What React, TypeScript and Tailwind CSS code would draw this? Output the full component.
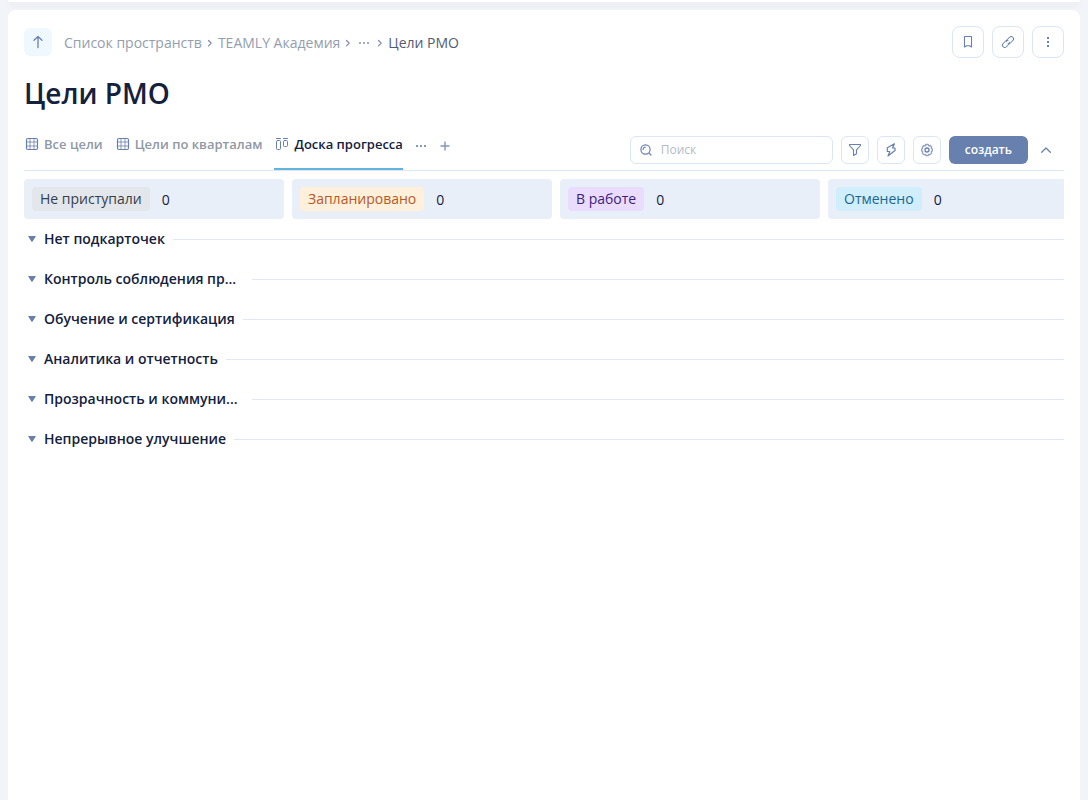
import { useState } from 'react';
import type { ReactNode } from 'react';

const crumbs = ['Список пространств', 'TEAMLY Академия'];

const tabs = [
  { id: 'all', label: 'Все цели', icon: 'table' },
  { id: 'quarters', label: 'Цели по кварталам', icon: 'table' },
  { id: 'board', label: 'Доска прогресса', icon: 'board' },
];

const columns = [
  { title: 'Не приступали', count: 0, badge: 'bg-[#e3e6ea] text-[#32404f]' },
  { title: 'Запланировано', count: 0, badge: 'bg-[#fff0db] text-[#b4592a]' },
  { title: 'В работе', count: 0, badge: 'bg-[#e9dcff] text-[#3f1d78]' },
  { title: 'Отменено', count: 0, badge: 'bg-[#d0eefb] text-[#1c6690]' },
];

const groups = [
  { title: 'Нет подкарточек', width: '' },
  { title: 'Контроль соблюдения пр...', width: 'w-[220px]' },
  { title: 'Обучение и сертификация', width: '' },
  { title: 'Аналитика и отчетность', width: '' },
  { title: 'Прозрачность и коммуни...', width: 'w-[220px]' },
  { title: 'Непрерывное улучшение', width: '' },
];

function Icon({ size = 16, children }: { size?: number; children: ReactNode }) {
  return (
    <svg
      width={size}
      height={size}
      viewBox={`0 0 ${size} ${size}`}
      fill="none"
      stroke="currentColor"
      strokeLinecap="round"
      strokeLinejoin="round"
      className="shrink-0"
      aria-hidden="true"
    >
      {children}
    </svg>
  );
}

function Chevron() {
  return (
    <Icon size={8}>
      <path d="M2.5 1.5 5.2 4.2 2.5 6.9" strokeWidth="1.2" />
    </Icon>
  );
}

function Dots() {
  return (
    <svg width="12" height="4" viewBox="0 0 12 4" fill="currentColor" aria-hidden="true">
      <rect x="1" y="1" width="2" height="2" />
      <rect x="5" y="1" width="2" height="2" />
      <rect x="9" y="1" width="2" height="2" />
    </svg>
  );
}

function TableIcon() {
  return (
    <Icon size={14}>
      <rect x="1.5" y="1.5" width="11" height="11" rx="1.5" strokeWidth="1.2" />
      <path d="M1.5 5h11M1.5 9h11M5 1.5v11M9 1.5v11" strokeOpacity="0.8" />
    </Icon>
  );
}

function BoardIcon() {
  return (
    <Icon size={14}>
      <path d="M1.5 1.5h4M8.5 1.5h4" />
      <rect x="1.5" y="3.5" width="4" height="9" rx="1" />
      <rect x="8.5" y="3.5" width="4" height="6" rx="1" />
    </Icon>
  );
}

function HeaderButton({ label, children }: { label: string; children: ReactNode }) {
  return (
    <button
      aria-label={label}
      className="flex size-8 items-center justify-center rounded-lg border border-[#dbe6f5] text-[#6780ad] hover:bg-[#f0f8ff]"
    >
      {children}
    </button>
  );
}

function ToolButton({ label, children }: { label: string; children: ReactNode }) {
  return (
    <button
      aria-label={label}
      className="flex size-7 shrink-0 items-center justify-center rounded-md border border-[#dbe6f5] text-[#6780ad] hover:bg-[#f0f8ff]"
    >
      {children}
    </button>
  );
}

export default function App() {
  const [active, setActive] = useState('board');
  const [query, setQuery] = useState('');

  return (
    <div className="flex min-h-screen flex-col bg-[#f3f4f9] font-['Open_Sans','Noto_Sans',sans-serif] text-[#14213d]">
      {/* Bottom edge of the app bar */}
      <div className="mx-2 h-0.5 rounded-b-lg bg-white shadow-[0_2px_8px_rgba(40,50,80,0.12)]" />

      <main className="mx-2 mt-2 flex-1 rounded-t-lg bg-white px-4 pt-4">
        {/* Breadcrumbs */}
        <header className="flex items-center justify-between">
          <nav className="flex items-center text-sm text-[#939eae]">
            <button
              aria-label="На уровень выше"
              className="mr-3 flex size-7 items-center justify-center rounded-md bg-[#f0f8ff] text-[#6780ad]"
            >
              <Icon>
                <path d="M8 13.5V2.5M4 6.2 8 2.5l4 3.7" strokeWidth="1.3" />
              </Icon>
            </button>
            <div className="flex items-center pt-0.5">
              {crumbs.map((crumb) => (
                <span key={crumb} className="flex items-center">
                  <a href="#">{crumb}</a>
                  <span className="mx-1 text-[#7c8aa5]">
                    <Chevron />
                  </span>
                </span>
              ))}
              <button aria-label="Показать скрытые" className="mx-0.5 text-[#a3aec4]">
                <Dots />
              </button>
              <span className="mx-1 text-[#7c8aa5]">
                <Chevron />
              </span>
              <a href="#" className="text-[#4f5d73]">Цели РМО</a>
            </div>
          </nav>
          <div className="flex gap-2">
            <HeaderButton label="В закладки">
              <Icon>
                <path d="M4.5 2.5h7v10.5l-2-1.3h-3l-2 1.3z" strokeWidth="1.1" />
              </Icon>
            </HeaderButton>
            <HeaderButton label="Скопировать ссылку">
              <Icon>
                <g transform="rotate(-45 8 8)">
                  <path d="M8.800 9.200a2.300 2.300 0 0 1-1.800 1H3.500a2.300 2.300 0 0 1 0-4.600H7a2.300 2.300 0 0 1 2 1.300" />
                  <path d="M7.200 6.800a2.300 2.300 0 0 1 1.800-1h3.500a2.300 2.300 0 0 1 0 4.600H9a2.300 2.300 0 0 1-2-1.300" />
                </g>
              </Icon>
            </HeaderButton>
            <HeaderButton label="Ещё">
              <svg width="16" height="16" viewBox="0 0 16 16" fill="currentColor" aria-hidden="true">
                <rect x="7" y="3" width="2" height="2" />
                <rect x="7" y="7" width="2" height="2" />
                <rect x="7" y="11" width="2" height="2" />
              </svg>
            </HeaderButton>
          </div>
        </header>

        <h1 className="mt-4 text-[28px] leading-[38px] font-semibold">Цели РМО</h1>

        {/* View tabs and toolbar */}
        <div className="mt-4 flex items-stretch justify-between border-b border-[#dbe6f5]">
          <div className="flex gap-3">
            {tabs.map((tab) => (
              <button
                key={tab.id}
                onClick={() => setActive(tab.id)}
                className={`flex items-start gap-1 border-b-2 pt-1.5 text-[13px] leading-5 font-semibold ${
                  active === tab.id ? 'border-[#63b3dc] text-[#14213d]' : 'border-transparent text-[#8f98a5]'
                }`}
              >
                <span className="flex h-5 w-4 items-center justify-center text-[#6780ad]">
                  {tab.icon === 'table' ? <TableIcon /> : <BoardIcon />}
                </span>
                {tab.label}
              </button>
            ))}
            <div className="flex h-8 items-center gap-3 pt-1 text-[#8496bd]">
              <button aria-label="Действия с видом">
                <Dots />
              </button>
              <button aria-label="Добавить вид">
                <Icon size={12}>
                  <path d="M6 2v8M2 6h8" strokeWidth="1.4" />
                </Icon>
              </button>
            </div>
          </div>

          <div className="flex items-center gap-2 pt-2 pb-1.5">
            <label className="flex h-7 w-[203px] items-center gap-2 rounded-md border border-[#dbe6f5] px-1.5 text-[#6780ad]">
              <Icon>
                <circle cx="8.5" cy="7.5" r="4.6" strokeWidth="1.2" />
                <path d="M12.5 11.5 14 13M6 7.500a2.600 2.600 0 0 1 2.200-2.400" strokeWidth="1.2" />
              </Icon>
              <input
                type="search"
                aria-label="Поиск"
                placeholder="Поиск"
                value={query}
                onChange={(e) => setQuery(e.target.value)}
                className="w-full min-w-0 bg-transparent text-xs text-[#14213d] outline-none placeholder:text-[#b3bbc6]"
              />
            </label>
            <ToolButton label="Фильтр">
              <Icon>
                <path d="M2.5 2.500h11v1l-4 4.300v4L6.500 13.500V7.800l-4-4.300z" strokeWidth="1.1" />
              </Icon>
            </ToolButton>
            <ToolButton label="Автоматизация">
              <Icon>
                <path d="M11.500 1.800 4.300 5.800v3.700h2.500L5 14l7-5.500V6H9.500z" strokeWidth="1.2" />
              </Icon>
            </ToolButton>
            <ToolButton label="Настройки">
              <Icon>
                <path
                  d="M6.800 2.500h2.400l.5 1.300 1.400-.3 1.500 1.500-.3 1.300 1 .8v1.800l-1 .8.3 1.400-1.500 1.500-1.400-.3-.5 1.200H6.800l-.5-1.200-1.400.3-1.500-1.500.3-1.400-1-.8V7.100l1-.8-.3-1.300 1.500-1.500 1.400.3z"
                  strokeWidth="1.3"
                  strokeOpacity="0.75"
                />
                <circle cx="8" cy="8" r="2" strokeWidth="1.3" />
              </Icon>
            </ToolButton>
            <button className="h-7 rounded-md bg-[#6780ad] px-4 text-xs leading-5 font-semibold text-white hover:bg-[#5a73a0]">
              создать
            </button>
            <button aria-label="Свернуть" className="mx-0.5 mr-2.5 text-[#6780ad]">
              <Icon>
                <path d="M3.7 10.200 8 6l4.300 4.200" strokeWidth="1.3" />
              </Icon>
            </button>
          </div>
        </div>

        {/* Board columns */}
        <div className="mt-2 flex gap-2 overflow-hidden">
          {columns.map((column) => (
            <section
              key={column.title}
              className="flex h-10 w-[260px] shrink-0 items-center gap-3 rounded bg-[#e8eff9] px-2"
            >
              <h2 className={`rounded px-2 text-sm leading-6 ${column.badge}`}>{column.title}</h2>
              <span className="pt-0.5 text-sm">{column.count}</span>
            </section>
          ))}
        </div>

        {/* Swimlanes */}
        <ul>
          {groups.map((group) => (
            <li key={group.title} className="flex h-10 items-center">
              <button className={`flex items-center text-sm font-semibold ${group.width}`}>
                <span className="flex w-5 shrink-0 pl-1 text-[#6780ad]">
                  <svg width="8" height="6" viewBox="0 0 8 6" fill="currentColor" aria-hidden="true">
                    <path d="M.8 0h6.400c.5 0 .7.400.4.800L4.400 5.700c-.2.300-.6.300-.8 0L.4.800C.1.400.3 0 .8 0z" />
                  </svg>
                </span>
                {group.title}
              </button>
              <span className="ml-2 h-px flex-1 bg-[#dfe7f2]" />
            </li>
          ))}
        </ul>
      </main>
    </div>
  );
}
